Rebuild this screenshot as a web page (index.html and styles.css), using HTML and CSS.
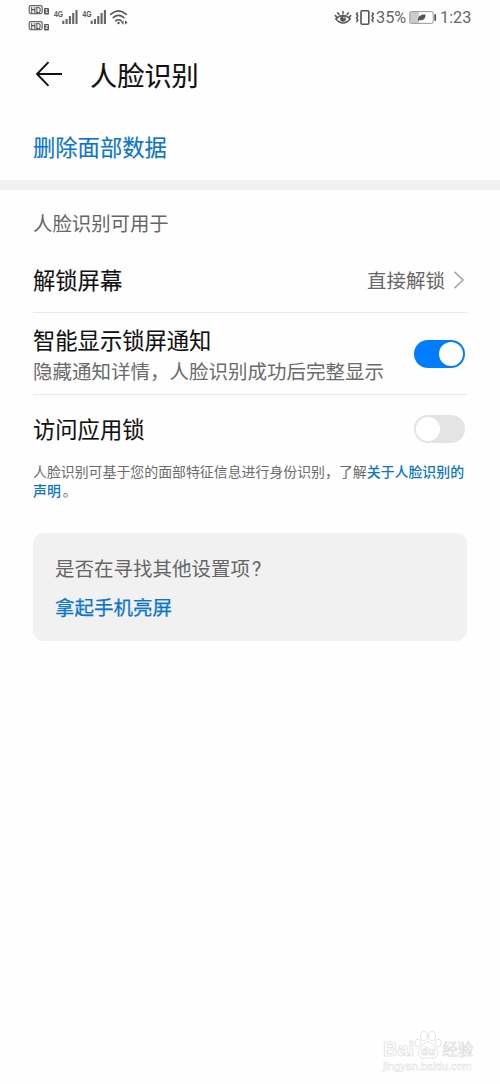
FILE: index.html
```html
<!DOCTYPE html>
<html lang="zh-CN">
<head>
<meta charset="utf-8">
<title>人脸识别</title>
<link rel="stylesheet" href="styles.css">
</head>
<body>
<div class="screen">
  <div class="status">
    <svg class="status-left" width="104" height="36" viewBox="0 0 104 36">
      <g fill="none" stroke="#666" stroke-width="1.200">
        <rect x="1.200" y="5.600" width="13" height="8" rx="1.500"/>
        <rect x="1.200" y="21.600" width="13" height="8" rx="1.500"/>
      </g>
      <g fill="#555" class="svg-text">
        <text x="2.500" y="12.500" font-size="8.200" font-weight="700" textLength="10.500" lengthAdjust="spacingAndGlyphs">HD</text>
        <text x="2.500" y="28.500" font-size="8.200" font-weight="700" textLength="10.500" lengthAdjust="spacingAndGlyphs">HD</text>
        <rect x="16" y="8" width="5" height="6.400" rx="1"/>
        <rect x="16" y="24" width="5" height="6.400" rx="1"/>
        <text x="26" y="16.600" font-size="9" font-weight="700" textLength="9" lengthAdjust="spacingAndGlyphs">4G</text>
        <text x="54.500" y="16.600" font-size="9" font-weight="700" textLength="9" lengthAdjust="spacingAndGlyphs">4G</text>
      </g>
      <g fill="#fff" class="svg-text" font-size="5.500" font-weight="700">
        <text x="17" y="13.200">1</text><text x="17" y="29.200">2</text>
      </g>
      <path fill="none" stroke="#666" stroke-width="2.100" d="M35.300 24v-3.300M38.600 24v-5M41.900 24v-8M45.200 24v-11M48.500 24v-14M63.700 24v-3.300M67 24v-5M70.300 24v-8M73.600 24v-11M76.900 24v-14"/>
      <g fill="none" stroke="#555" stroke-width="1.600" stroke-linecap="round">
        <path d="M82.700 14.300q7.800-6.800 15.600 0M85.200 17.700q5.300-4.500 10.600 0M87.700 20.800q2.800-2.200 5.600 0"/>
      </g>
      <circle cx="90.500" cy="23" r="1.200" fill="#555"/>
      <path fill="#555" d="M95.500 20.400l-2.500 2.200 2.500 2.200zM97 20.400l2.500 2.200-2.500 2.200z"/>
    </svg>
    <div class="status-right">
      <svg width="42" height="36" viewBox="0 0 42 36">
        <g fill="none" stroke="#555" stroke-width="1.500" stroke-linecap="round">
          <path d="M1.800 19q7.200-7 14.400 0-7.200 8-14.400 0zM9 13.500v-2M5 14.600l-1.400-1.800M13 14.600l1.400-1.800M2.300 16.600l-1-1M15.700 16.600l1-1"/>
        </g>
        <circle cx="9" cy="18.800" r="2.900" fill="#555"/><circle cx="9.900" cy="17.800" r=".7" fill="#fff"/>
        <rect x="27" y="10.700" width="7.800" height="13.600" rx="1.200" fill="none" stroke="#555" stroke-width="1.600"/>
        <path fill="none" stroke="#555" stroke-width="1.500" d="M23.800 12.500l-1.300 1.500 1.300 2-1.300 2 1.300 2-1.300 2M38 12.500l1.300 1.500-1.300 2 1.300 2-1.300 2 1.300 2"/>
      </svg>
      <span class="percent">35%</span>
      <svg class="battery" width="28" height="36" viewBox="0 0 28 36">
        <rect x="1" y="12" width="9" height="11" fill="#ccc"/>
        <rect x=".8" y="11.600" width="23.400" height="11.800" rx="1.400" fill="none" stroke="#999" stroke-width="1"/>
        <path d="M26.200 14.200v6.600" stroke="#555" stroke-width="1.800"/>
        <path d="M9 21c-.5-5 2.500-6.500 7.500-6.500 0 4-2 6.500-5.500 5.500z" fill="#555"/>
      </svg>
      <span class="time">1:23</span>
    </div>
  </div>
  <header class="header">
    <svg class="back" width="28" height="28" viewBox="0 0 28 28"><path d="M27 14H2.500M13.500 2.200L2 14l11.500 11.800" fill="none" stroke="#111" stroke-width="1.900"/></svg>
    <h1>人脸识别</h1>
  </header>
  <a class="delete">删除面部数据</a>
  <div class="band"></div>
  <main class="content">
    <div class="section">人脸识别可用于</div>
    <div class="row unlock">
      <span class="label">解锁屏幕</span>
      <span class="value">直接解锁<svg width="12" height="20" viewBox="0 0 12 20"><path d="M1.500 1.800L10 10l-8.500 8.200" fill="none" stroke="#aaa" stroke-width="1.700"/></svg></span>
    </div>
    <div class="row smart">
      <div class="text"><div class="label">智能显示锁屏通知</div><div class="sub">隐藏通知详情，人脸识别成功后完整显示</div></div>
      <span class="switch on"><i></i></span>
    </div>
    <div class="row access">
      <span class="label">访问应用锁</span>
      <span class="switch"><i></i></span>
    </div>
    <p class="note">人脸识别可基于您的面部特征信息进行身份识别，了解<b>关于人脸识别的<br>声明</b><span class="stop">。</span></p>
    <section class="card">
      <div class="question">是否在寻找其他设置项<span class="mark">?</span></div>
      <a class="card-link">拿起手机亮屏</a>
    </section>
  </main>
  <div class="watermark">
    <div class="brand"><span>Bai</span><svg width="28" height="30" viewBox="0 0 28 30"><g fill="#fff" stroke="#ddd" stroke-width=".8"><ellipse cx="10" cy="6" rx="3.500" ry="4.500"/><ellipse cx="18" cy="6" rx="3.500" ry="4.500"/><ellipse cx="4" cy="13" rx="3" ry="4"/><ellipse cx="24" cy="13" rx="3" ry="4"/><path d="M14 12c4 0 5 4 8 7s2 9-3 9H9c-5 0-6-6-3-9s4-7 8-7z"/></g><text x="7" y="25" font-size="11" fill="#fff" stroke="#ddd" stroke-width=".7" textLength="14" class="svg-text">du</text></svg><span class="cn">经验</span></div>
    <div class="site">jingyan.baidu.com</div>
  </div>
</div>
</body>
</html>
```
FILE: styles.css
```css
* { box-sizing: border-box; }
body {
  margin: 0;
  background: #fefefe;
  font-family: "Noto Sans CJK SC", sans-serif;
  color: #111;
}
.screen { position: relative; width: 500px; height: 1084px; overflow: hidden; background: #fefefe; }
.svg-text { font-family: "Liberation Sans", sans-serif; }
.status { height: 36px; display: flex; justify-content: space-between; padding: 0 29px 0 28px; }
.status-right { display: flex; align-items: center; font: 16.3px/36px Roboto, sans-serif; color: #666; }
.status-right svg { flex: none; }
.percent { width: 33px; white-space: nowrap; }
.time { width: 31px; white-space: nowrap; }
.battery { margin-right: 3px; }
.header { height: 78px; display: flex; align-items: center; padding: 0 0 2px 35px; gap: 27px; }
.header h1 { margin: 0; font-size: 27.2px; line-height: 40px; font-weight: 400; -webkit-text-stroke: .15px; }
.back { margin-top: -1px; }
.delete { display: block; height: 66px; padding-left: 33px; font-size: 22.3px; line-height: 64px; font-weight: 400; -webkit-text-stroke: .15px; color: #0b75c9; }
.band { height: 10px; background: #f1f1f1; }
.content { padding: 0 33px; }
.section { height: 58px; padding-top: 4px; font-size: 19.4px; line-height: 57px; color: #666; }
.row { display: flex; align-items: center; justify-content: space-between; }
.unlock { height: 65px; padding-bottom: 1px; border-bottom: 1px solid #e8e8e8; }
.unlock .label { padding-bottom: 2px; }
.smart { height: 82px; padding-right: 2px; border-bottom: 1px solid #e8e8e8; }
.text { padding-top: 2px; }
.access { height: 68px; padding-right: 2px; }
.access .label { padding-bottom: 2px; }
.label { font-size: 22.3px; line-height: 32px; font-weight: 400; -webkit-text-stroke: .1px; }
.sub { font-size: 19.5px; line-height: 31px; color: #6b6b6b; white-space: nowrap; }
.value { display: flex; align-items: center; gap: 8px; padding-right: 2px; font-size: 19.5px; color: #666; }
.switch { flex: none; width: 51px; height: 28px; border-radius: 14px; background: #e4e4e4; padding: 2px; display: flex; }
.switch i { width: 24px; height: 24px; border-radius: 50%; background: #fff; }
.switch.on { background: #007dff; justify-content: flex-end; }
.note { margin: -1px 0 0; font-size: 13.92px; line-height: 19px; color: #6b6b6b; white-space: nowrap; }
.note b { font-weight: 500; color: #0b75c9; }
.stop { margin-left: 2px; }
.card { margin-top: 33px; height: 108px; border-radius: 11px; background: #f1f1f1; padding: 16px 22px; }
.question { font-size: 19.5px; line-height: 38px; color: #666; }
.mark { margin-left: 2px; font-family: Roboto, sans-serif; }
.card-link { display: block; font-size: 19.5px; line-height: 36px; font-weight: 400; -webkit-text-stroke: .25px; color: #0b75c9; }
.watermark { position: absolute; left: 383px; top: 1030px; width: 94px; color: #fff; -webkit-text-stroke: .7px #ddd; font-family: "Liberation Sans", sans-serif; }
.brand { display: flex; align-items: flex-end; height: 30px; font-size: 20px; line-height: 22px; font-weight: 700; }
.brand .cn { font: 400 15.5px/24px "Noto Sans CJK SC", sans-serif; }
.site { font-size: 11px; line-height: 13px; -webkit-text-stroke: .4px #ddd; }
```
